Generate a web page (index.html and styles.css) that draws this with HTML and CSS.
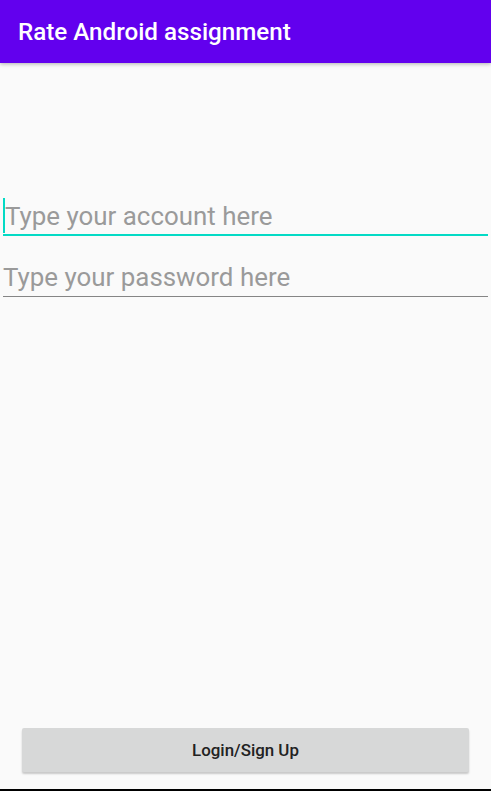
FILE: index.html
```html
<!DOCTYPE html>
<html>
<head>
<meta charset="utf-8">
<link rel="stylesheet" href="styles.css">
</head>
<body>
<div class="screen">
  <header class="appbar"><span class="title">Rate Android assignment</span></header>
  <main class="content">
    <div class="field field-focused">
      <span class="cursor"></span>
      <span class="placeholder">Type your account here</span>
    </div>
    <div class="field">
      <span class="placeholder">Type your password here</span>
    </div>
    <div class="spacer"></div>
    <div class="btn-wrap">
      <button class="btn">Login/Sign Up</button>
    </div>
  </main>
  <div class="navbar"></div>
</div>
</body>
</html>
```
FILE: styles.css
```css
html, body {
  margin: 0;
  padding: 0;
  background: #fafafa;
}
.screen {
  width: 491px;
  height: 791px;
  display: flex;
  flex-direction: column;
  font-family: Roboto, "Noto Sans", sans-serif;
  overflow: hidden;
}
.appbar {
  height: 63px;
  background: #6200ee;
  display: flex;
  align-items: center;
  padding-left: 18px;
  box-shadow: 0 1px 4px rgba(0,0,0,0.3);
  position: relative;
  z-index: 1;
  flex: none;
}
.title {
  color: #fff;
  font-size: 24.2px;
  font-weight: 500;
}
.content {
  flex: 1;
  display: flex;
  flex-direction: column;
  padding: 0 3px;
}
.field {
  display: flex;
  align-items: center;
  height: 38px;
  border-bottom: 1px solid #858585;
  position: relative;
}
.field-focused {
  margin-top: 134px;
  border-bottom: 2px solid #03dac5;
  height: 37px;
  margin-bottom: 22px;
}
.cursor {
  width: 2px;
  height: 35px;
  background: #03dac5;
  flex: none;
}
.placeholder {
  color: #9a9a9a;
  font-size: 25.9px;
  padding-left: 0;
  white-space: nowrap;
}
.spacer {
  flex: 1;
}
.btn-wrap {
  padding: 0 19px 17px;
}
.btn {
  width: 100%;
  height: 44px;
  border: none;
  border-radius: 2px;
  background: #d7d8d8;
  box-shadow: 0 2px 2px rgba(0,0,0,0.2);
  font-family: Roboto, "Noto Sans", sans-serif;
  font-size: 16.9px;
  font-weight: 500;
  color: #222;
  padding: 0;
}
.navbar {
  height: 2px;
  background: #000;
  flex: none;
}
```
